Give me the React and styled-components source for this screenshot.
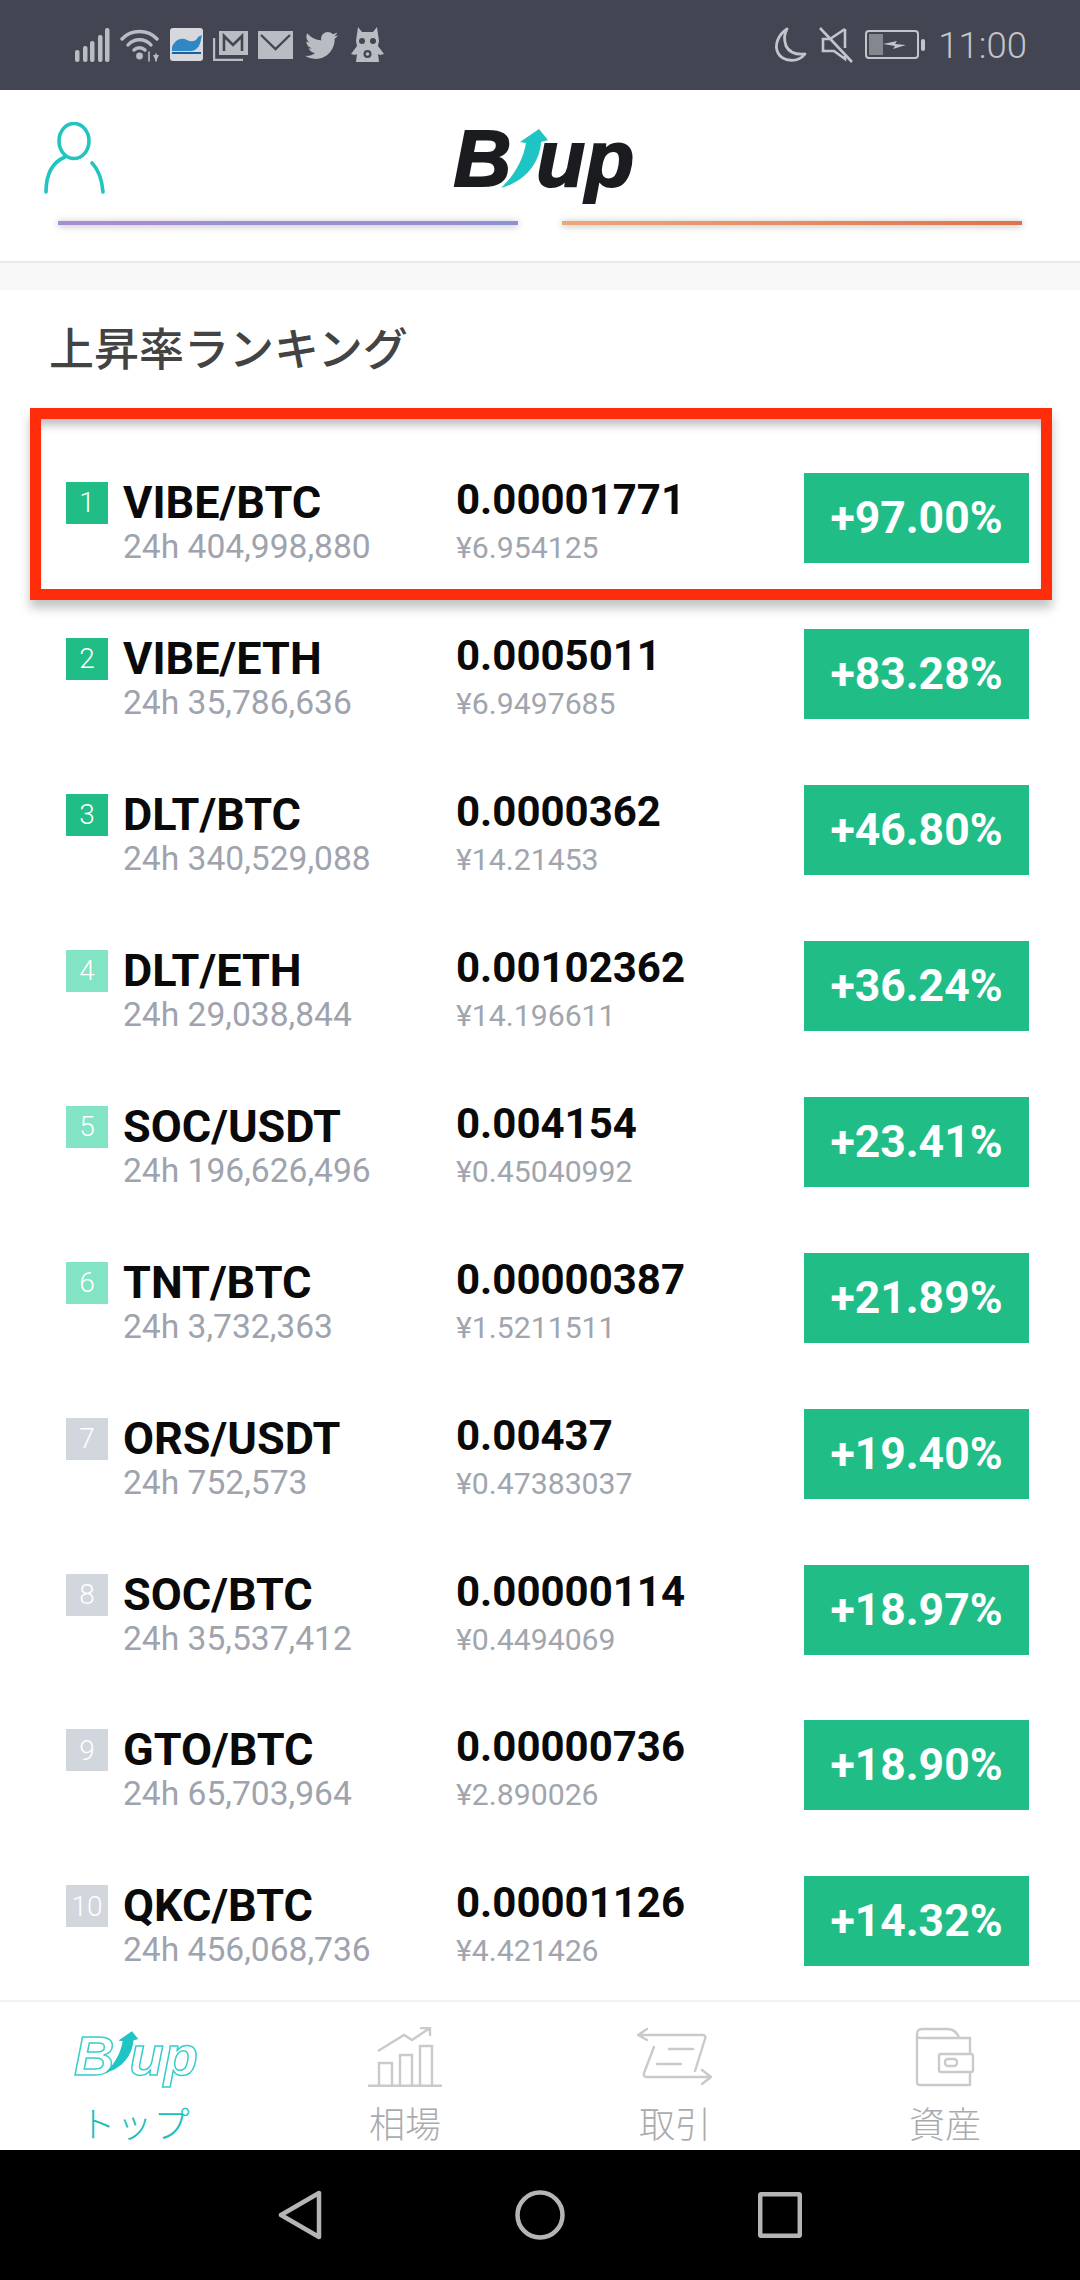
import React from 'react'
import styled, { createGlobalStyle } from 'styled-components'
import { FaTwitter } from 'react-icons/fa'

const GlobalStyle = createGlobalStyle`
  html, body {
    margin: 0;
    padding: 0;
    background: #fff;
  }
  * {
    box-sizing: border-box;
  }
`

const Page = styled.div`
  position: relative;
  width: 1080px;
  height: 2280px;
  overflow: hidden;
  display: flex;
  flex-direction: column;
  background: #fff;
  font-family: Roboto, 'Noto Sans CJK JP', sans-serif;
`

const StatusBar = styled.div`
  height: 90px;
  flex: none;
  display: flex;
  align-items: center;
  justify-content: space-between;
  padding: 0 53px 0 75px;
  background: #434652;
  color: #c2c5cb;
`

const StatusGroup = styled.div`
  display: flex;
  align-items: center;
  gap: ${(p) => p.$gap || 10}px;
`

const TwitterIcon = styled(FaTwitter)`
  margin: 0 3px 0 2px;
`

const Clock = styled.span`
  font-size: 36.5px;
  font-weight: 300;
`

const Header = styled.header`
  height: 173px;
  flex: none;
  position: relative;
  display: flex;
  justify-content: center;
  padding-top: 30px;
  border-bottom: 2px solid #e9e9e9;
`

const UserButton = styled.div`
  position: absolute;
  left: 44px;
  top: 32px;
  line-height: 0;
`

const Logo = styled.div`
  position: relative;
  width: 178px;
  height: 80px;
  margin-left: 5px;
  font-family: 'Liberation Sans', sans-serif;
  font-style: italic;
  font-weight: 700;
  font-size: 80px;
  line-height: 78px;
  color: #1b1c20;
  -webkit-text-stroke: 2px #1b1c20;
  white-space: pre;
`

const LogoArrow = styled.svg`
  position: absolute;
  left: 47px;
  top: 9px;
`

const UpLetters = styled.span`
  margin-left: 25px;
`

const Banner = styled.div`
  position: absolute;
  left: 58px;
  right: 58px;
  top: 131px;
  display: flex;
  gap: 44px;
`

const BannerCard = styled.div`
  flex: 1;
  height: 4px;
  background: ${(p) => p.$color};
  box-shadow: 0 1px 7px rgba(60, 60, 60, 0.4);
`

const Gap = styled.div`
  height: 27px;
  flex: none;
  background: #f8f8f8;
`

const Title = styled.h2`
  height: 150px;
  flex: none;
  margin: 0;
  padding: 27px 0 0 49px;
  font-family: 'Noto Sans CJK JP', sans-serif;
  font-size: 45px;
  line-height: 60px;
  font-weight: 500;
  color: #434343;
`

const List = styled.div`
  flex: none;
  height: 1560px;
`

const Row = styled.div`
  height: 155.95px;
  display: grid;
  grid-template-columns: 58px 333px 347px 225px;
  align-items: center;
  padding-left: 66px;
`

const Badge = styled.div`
  width: 42px;
  height: 42px;
  margin-bottom: 30px;
  display: flex;
  align-items: center;
  justify-content: center;
  font-size: 28px;
  font-weight: 300;
  color: #fff;
  background: ${(p) => (p.$rank <= 3 ? '#21bd87' : p.$rank <= 6 ? '#82e4c4' : '#d2d6dd')};
`

const NameCell = styled.div`
  padding-top: 14px;
  margin-left: -1px;
`

const Pair = styled.div`
  font-size: 45px;
  line-height: 44px;
  font-weight: 700;
  color: #0a0a0a;
`

const Volume = styled.div`
  font-size: 33.6px;
  line-height: 44px;
  color: #9ea3ad;
`

const PriceCell = styled.div`
  padding-top: 11px;
  margin-left: -1px;
`

const Price = styled.div`
  font-size: 42px;
  line-height: 46px;
  font-weight: 700;
  color: #0a0a0a;
`

const Yen = styled.div`
  font-size: 30.2px;
  line-height: 44px;
  margin-top: 3px;
  color: #a0a5ae;
`

const Change = styled.div`
  height: 90px;
  display: flex;
  align-items: center;
  justify-content: center;
  background: #21bd87;
  color: #fff;
  font-size: 44.5px;
  font-weight: 700;
`

const Highlight = styled.div`
  position: absolute;
  left: 30px;
  top: 408px;
  width: 1022px;
  height: 192px;
  border: 11px solid #ff2d0a;
  box-shadow: 0 8px 10px rgba(40, 40, 40, 0.28), inset 0 10px 8px -4px rgba(40, 40, 50, 0.3);
`

const TabBar = styled.nav`
  height: 150px;
  flex: none;
  display: grid;
  grid-template-columns: repeat(4, 270px);
  border-top: 2px solid #f2f2f2;
  overflow: hidden;
`

const Tab = styled.div`
  display: flex;
  flex-direction: column;
  align-items: center;
  padding-top: 23px;
  color: ${(p) => (p.$active ? '#22bdb8' : '#a9abae')};
`

const TabIcon = styled.div`
  height: 64px;
  display: flex;
  align-items: center;
  justify-content: center;
`

const TabLabel = styled.div`
  font-family: 'Noto Sans CJK JP', sans-serif;
  font-size: 36px;
  line-height: 50px;
  font-weight: 300;
  margin-top: 8px;
  letter-spacing: ${(p) => (p.$wide ? '1px' : '0')};
`

const MiniLogo = styled.div`
  position: relative;
  width: 122px;
  height: 52px;
  font-family: 'Liberation Sans', sans-serif;
  font-style: italic;
  font-weight: 700;
  font-size: 56px;
  line-height: 50px;
  color: #fff;
  -webkit-text-stroke: 1.5px #35cfc9;
  white-space: pre;
`

const MiniArrow = styled.svg`
  position: absolute;
  left: 31px;
  top: 0;
`

const MiniUp = styled.span`
  margin-left: 15px;
`

const NavBar = styled.div`
  height: 130px;
  flex: none;
  display: flex;
  justify-content: center;
  align-items: center;
  background: #000;
`

const NavCell = styled.div`
  width: 240px;
  display: flex;
  justify-content: center;
  line-height: 0;
`

const Signal = () => (
  <svg width="35" height="34" viewBox="0 0 35 34" fill="#b9bcc3">
    <rect x="0" y="22" width="4.5" height="12" rx="2" />
    <rect x="8" y="18" width="4.5" height="16" rx="2" />
    <rect x="15" y="13" width="4.5" height="21" rx="2" />
    <rect x="23" y="7" width="4.5" height="27" rx="2" />
    <rect x="30" y="0" width="4.5" height="34" rx="2" />
  </svg>
)

const Wifi = () => (
  <svg width="40" height="34" viewBox="0 0 40 34" fill="none" stroke="#b9bcc3" strokeWidth="3.4" strokeLinecap="round">
    <path d="M2 11C11 1 28 1 37 11" />
    <path d="M8 17C14 10 25 10 31 17" />
    <path d="M14 22C17 19 22 19 25 22" />
    <circle cx="19.5" cy="28" r="3.4" fill="#b9bcc3" stroke="none" />
    <path d="M29 24V33M36 26V33" strokeWidth="1.6" />
    <path d="M33 27L36 33L39 27Z" fill="#b9bcc3" stroke="none" />
  </svg>
)

const Whale = () => (
  <svg width="33" height="34" viewBox="0 0 33 34">
    <rect width="33" height="33" rx="3" fill="#d6d8dd" />
    <path d="M2 19C5 11 12 9 17 12C21 14 26 14 28 9C29 8 31 8 32 7C31 10 31 14 29 18C27 21 24 23 20 23H2Z" fill="#2f87c6" />
    <rect x="2" y="24" width="29" height="2" fill="#1d5f9c" />
  </svg>
)

const Gmail = () => (
  <svg width="35" height="32" viewBox="0 0 35 32" fill="none">
    <path d="M1 9V31H30" stroke="#b9bcc3" strokeWidth="2.4" />
    <rect x="6" y="2" width="29" height="24" fill="#b9bcc3" />
    <path d="M11 22V7L20 16L29 7V22" stroke="#434652" strokeWidth="2.6" />
  </svg>
)

const Mail = () => (
  <svg width="35" height="29" viewBox="0 0 35 29">
    <rect y="0" width="35" height="28" fill="#b9bcc3" />
    <path d="M3 4L17.5 18L32 4" stroke="#434652" strokeWidth="2.4" fill="none" />
  </svg>
)

const Ghost = () => (
  <svg width="33" height="36" viewBox="0 0 33 36" fill="#b9bcc3">
    <path d="M7 0L11 5H22L26 0L28 14L27 19L33 27L29 28L27 27L28 35H5L6 27L4 28L0 27L6 19L5 14Z" />
    <circle cx="11" cy="14" r="3" fill="#434652" />
    <circle cx="22" cy="14" r="3" fill="#434652" />
    <circle cx="16.5" cy="27" r="4" fill="#434652" />
    <circle cx="16.5" cy="27" r="1.8" />
  </svg>
)

const Moon = () => (
  <svg width="34" height="36" viewBox="0 0 34 36" fill="none" stroke="#c2c5cb" strokeWidth="2.8" strokeLinejoin="round">
    <path d="M14 2C5 8 1 18 5 26C10 35 25 36 32 27C22 28 16 25 13 19C11 13 11 7 14 2Z" />
  </svg>
)

const Muted = () => (
  <svg width="34" height="36" viewBox="0 0 34 36" fill="none" stroke="#c2c5cb" strokeWidth="2.6">
    <path d="M26 2V21M26 29V32L15 24H4V12H11L26 2" />
    <path d="M1 1L33 35" />
  </svg>
)

const Battery = () => (
  <svg width="61" height="30" viewBox="0 0 61 30">
    <rect x="1" y="1" width="52" height="27" rx="3" fill="none" stroke="#c2c5cb" strokeWidth="2" />
    <rect x="4" y="4" width="14" height="21" fill="#85878f" />
    <path d="M18 14L32 11L30 14L41 15L28 19L30 16Z" fill="#c2c5cb" />
    <rect x="56" y="9" width="4" height="12" rx="2" fill="#c2c5cb" />
  </svg>
)

const UserIcon = () => (
  <svg width="62" height="72" viewBox="0 0 62 72" fill="none" stroke="#21c4bf" strokeWidth="3.6" strokeLinecap="round">
    <ellipse cx="30" cy="19" rx="15" ry="17.5" />
    <path d="M21 35C9 40 2 50 2 70" />
    <path d="M48 41C55 48 58 58 59 70" />
  </svg>
)

const Arrow = ({ as: Svg, width, height }) => (
  <Svg width={width} height={height} viewBox="0 0 48 60">
    <path d="M0 59C12 48 22 32 25 14L19 13L38 0L47 11L40 13C39 32 26 52 0 59Z" fill="#1fc4c4" />
  </Svg>
)

const ChartIcon = () => (
  <svg width="74" height="60" viewBox="0 0 74 60" fill="none" stroke="#c9cacc" strokeWidth="2.4">
    <path d="M10 24L36 8L44 13L62 1M52 1H62V9" />
    <path d="M11 58V36H24V58M32 58V28H44V58M52 58V19H64V58" />
    <path d="M0 59H74" strokeWidth="3" />
  </svg>
)

const TradeIcon = () => (
  <svg width="76" height="60" viewBox="0 0 76 60" fill="none" stroke="#c9cacc" strokeWidth="2.4" strokeLinecap="round" strokeLinejoin="round">
    <path d="M10 2L1 8L10 13M2 8H66C68 8 69 10 68 12L58 44" />
    <path d="M17 20L7 46C6 49 8 50 10 50H72M65 43L74 50L65 57" />
    <path d="M32 22H56M20 37H44" />
  </svg>
)

const WalletIcon = () => (
  <svg width="60" height="60" viewBox="0 0 60 60" fill="none" stroke="#c9cacc" strokeWidth="2.4" strokeLinejoin="round">
    <path d="M2 8C2 3 4 2 8 2H32C38 2 42 5 44 11H55V27M55 45V58H5C3 58 2 57 2 55V8C2 11 4 11 8 11H44" />
    <rect x="24" y="27" width="34" height="18" rx="2" />
    <rect x="30" y="32" width="12" height="7" rx="3" />
  </svg>
)

const rows = [
  { pair: 'VIBE/BTC', volume: '24h 404,998,880', price: '0.00001771', yen: '¥6.954125', change: '+97.00%' },
  { pair: 'VIBE/ETH', volume: '24h 35,786,636', price: '0.0005011', yen: '¥6.9497685', change: '+83.28%' },
  { pair: 'DLT/BTC', volume: '24h 340,529,088', price: '0.0000362', yen: '¥14.21453', change: '+46.80%' },
  { pair: 'DLT/ETH', volume: '24h 29,038,844', price: '0.00102362', yen: '¥14.196611', change: '+36.24%' },
  { pair: 'SOC/USDT', volume: '24h 196,626,496', price: '0.004154', yen: '¥0.45040992', change: '+23.41%' },
  { pair: 'TNT/BTC', volume: '24h 3,732,363', price: '0.00000387', yen: '¥1.5211511', change: '+21.89%' },
  { pair: 'ORS/USDT', volume: '24h 752,573', price: '0.00437', yen: '¥0.47383037', change: '+19.40%' },
  { pair: 'SOC/BTC', volume: '24h 35,537,412', price: '0.00000114', yen: '¥0.4494069', change: '+18.97%' },
  { pair: 'GTO/BTC', volume: '24h 65,703,964', price: '0.00000736', yen: '¥2.890026', change: '+18.90%' },
  { pair: 'QKC/BTC', volume: '24h 456,068,736', price: '0.00001126', yen: '¥4.421426', change: '+14.32%' },
]

const App = () => {
  return (
    <Page>
      <GlobalStyle />
      <StatusBar>
        <StatusGroup $gap={10}>
          <Signal />
          <Wifi />
          <Whale />
          <Gmail />
          <Mail />
          <TwitterIcon size={33} color="#b9bcc3" />
          <Ghost />
        </StatusGroup>
        <StatusGroup $gap={12}>
          <Moon />
          <Muted />
          <Battery />
          <Clock>11:00</Clock>
        </StatusGroup>
      </StatusBar>

      <Header>
        <UserButton>
          <UserIcon />
        </UserButton>
        <Logo>
          B<UpLetters>up</UpLetters>
          <Arrow as={LogoArrow} width={48} height={60} />
        </Logo>
        <Banner>
          <BannerCard $color="linear-gradient(90deg, #a98bd8, #8f8fd6)" />
          <BannerCard $color="linear-gradient(90deg, #eba878, #e0714f)" />
        </Banner>
      </Header>
      <Gap />

      <Title>上昇率ランキング</Title>

      <List>
        {rows.map((row, i) => (
          <Row key={row.pair}>
            <Badge $rank={i + 1}>{i + 1}</Badge>
            <NameCell>
              <Pair>{row.pair}</Pair>
              <Volume>{row.volume}</Volume>
            </NameCell>
            <PriceCell>
              <Price>{row.price}</Price>
              <Yen>{row.yen}</Yen>
            </PriceCell>
            <Change>{row.change}</Change>
          </Row>
        ))}
      </List>

      <Highlight />

      <TabBar>
        <Tab $active>
          <TabIcon>
            <MiniLogo>
              B<MiniUp>up</MiniUp>
              <Arrow as={MiniArrow} width={34} height={43} />
            </MiniLogo>
          </TabIcon>
          <TabLabel $wide>トップ</TabLabel>
        </Tab>
        <Tab>
          <TabIcon>
            <ChartIcon />
          </TabIcon>
          <TabLabel>相場</TabLabel>
        </Tab>
        <Tab>
          <TabIcon>
            <TradeIcon />
          </TabIcon>
          <TabLabel>取引</TabLabel>
        </Tab>
        <Tab>
          <TabIcon>
            <WalletIcon />
          </TabIcon>
          <TabLabel>資産</TabLabel>
        </Tab>
      </TabBar>

      <NavBar>
        <NavCell>
          <svg width="44" height="50" viewBox="0 0 44 50" fill="none" stroke="#b5b5b5" strokeWidth="4.5" strokeLinejoin="round">
            <path d="M41 3V47L3 25Z" />
          </svg>
        </NavCell>
        <NavCell>
          <svg width="50" height="50" viewBox="0 0 50 50" fill="none" stroke="#b5b5b5" strokeWidth="4.5">
            <circle cx="25" cy="25" r="22.5" />
          </svg>
        </NavCell>
        <NavCell>
          <svg width="44" height="46" viewBox="0 0 44 46" fill="none" stroke="#b5b5b5" strokeWidth="4.5" strokeLinejoin="round">
            <rect x="2.2" y="2.2" width="39.6" height="41.6" rx="1" />
          </svg>
        </NavCell>
      </NavBar>
    </Page>
  )
}

export default App
